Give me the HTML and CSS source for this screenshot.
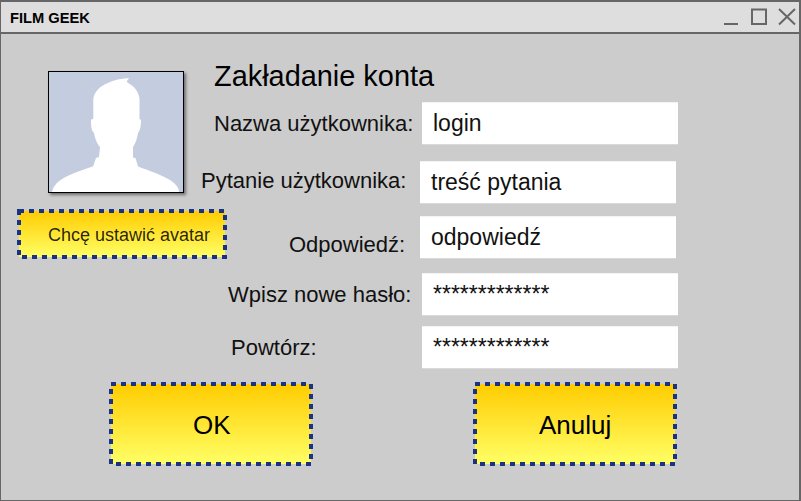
FILE: index.html
```html
<!DOCTYPE html>
<html lang="pl">
<head>
<meta charset="utf-8">
<title>FILM GEEK</title>
<link rel="stylesheet" href="styles.css">
</head>
<body>
<div class="window">
  <header class="titlebar">
    <h1 class="app-name">FILM GEEK</h1>
    <svg class="controls" width="76" height="20" viewBox="0 0 76 20">
      <path d="M1 16H15"/>
      <rect x="29" y="1.500" width="14" height="14.500"/>
      <path d="M56 1L72 16.500M72 1L56 16.500"/>
    </svg>
  </header>
  <main class="content">
    <aside class="profile">
      <svg class="avatar" width="136" height="122" viewBox="0 0 136 122">
        <rect class="avatar-bg" x="0.5" y="0.5" width="135" height="121"/>
        <path class="avatar-person" d="M4 121C5 116 8 112 14 108C22 103 34 99 45 95.500L48 87L51 86L52 76C48 71 47 67 46 62C43 59 43 54 43 48.500L45.300 48V28C46 21 52 15 60 12C67 8.500 75 7.500 81 7.300L78.500 10.500L81.500 13C86 15 91 21 91.500 28V48L93 49C93 55 92 60 90 62C89 67 88 72 85 76V86.500L87.500 87L90 95.500C102 100 114 104 122 109C128 113 131 117 131 121Z"/>
      </svg>
      <button class="btn btn-avatar" type="button">
        <svg class="frame" width="210" height="50"><rect x="2" y="2" width="206" height="46"/></svg>
        <span class="btn-label">Chcę ustawić avatar</span>
      </button>
    </aside>
    <form class="form">
      <h2 class="heading">Zakładanie konta</h2>
      <div class="row row-name"><label>Nazwa użytkownika:</label><div class="field">login</div></div>
      <div class="row row-question"><label>Pytanie użytkownika:</label><div class="field">treść pytania</div></div>
      <div class="row row-answer"><label>Odpowiedź:</label><div class="field">odpowiedź</div></div>
      <div class="row row-password"><label>Wpisz nowe hasło:</label><div class="field">*************</div></div>
      <div class="row row-repeat"><label>Powtórz:</label><div class="field">*************</div></div>
    </form>
  </main>
  <footer class="actions">
    <button class="btn btn-main" type="button">
      <svg class="frame" width="204" height="84"><rect x="2" y="2" width="200" height="80"/></svg>
      <span class="btn-label">OK</span>
    </button>
    <button class="btn btn-main btn-cancel" type="button">
      <svg class="frame" width="204" height="84"><rect x="2" y="2" width="200" height="80"/></svg>
      <span class="btn-label">Anuluj</span>
    </button>
  </footer>
</div>
</body>
</html>
```
FILE: styles.css
```css
* { box-sizing: border-box; }

body {
  margin: 0;
  font-family: "Liberation Sans", Arial, sans-serif;
  color: #000;
}

.window {
  width: 801px;
  height: 501px;
  display: flex;
  flex-direction: column;
  overflow: hidden;
  background: #ccc;
  border: solid #666;
  border-width: 2px 2px 1px 1px;
}

.titlebar {
  flex: none;
  height: 32px;
  display: flex;
  align-items: flex-start;
  justify-content: space-between;
  padding: 6px 0 0 9px;
  background: #dedede;
  border-bottom: 2px solid #666;
}

.app-name {
  margin: 2px 0 0;
  font-size: 14.7px;
  line-height: 17px;
  font-weight: bold;
}

.controls {
  fill: none;
  stroke: #666;
  stroke-width: 2;
}

.content {
  flex: none;
  height: 348px;
  display: flex;
}

.profile {
  flex: none;
  width: 200px;
  padding: 37px 0 0 16px;
}

.avatar {
  display: block;
  margin-left: 31px;
  filter: drop-shadow(2px 2px 1.5px rgba(0, 0, 0, .45));
}

.avatar-bg { fill: #c4cce0; stroke: #000; }
.avatar-person { fill: #fff; }

.btn {
  display: grid;
  padding: 0;
  border: 0;
  background: none;
  font-family: inherit;
  color: #000;
}

.btn > * { grid-area: 1 / 1; }

.frame {
  display: block;
  fill: none;
  stroke: #1a3283;
  stroke-width: 4;
  stroke-dasharray: 5 5;
  background: linear-gradient(#fc0, #ff6) center / calc(100% - 4px) calc(100% - 4px) no-repeat;
}

.btn-label { position: relative; text-align: left; }

.btn-avatar { width: 210px; margin-top: 16px; }

.btn-avatar .btn-label {
  padding: 16px 0 0 31px;
  font-size: 18px;
  line-height: 20px;
  color: rgba(0, 0, 0, .85);
}

.form { flex: none; padding-top: 26px; }

.heading {
  margin: 0 0 0 13px;
  font-size: 28.9px;
  line-height: 32px;
  height: 42px;
  font-weight: normal;
}

.row {
  display: flex;
  height: 43px;
}

.row label {
  width: 221px;
  font-size: 22px;
  line-height: 25px;
  white-space: nowrap;
  color: #111;
}

.field {
  width: 256px;
  padding: 7px 0 0 11px;
  background: #fff;
  border-top: 1px solid #f3f3f3;
  border-bottom: 1px solid #d9d9d9;
  font-size: 23px;
  line-height: 26px;
  color: #111;
}

.row-name label { padding: 9px 0 0 13px; }
.row-question { margin-top: 16px; }
.row-question label { width: 219px; padding-top: 7px; }
.row-answer { margin-top: 12px; }
.row-answer label { width: 219px; padding: 16px 0 0 88px; }
.row-password { margin-top: 14px; }
.row-password label { padding: 9px 0 0 27px; }
.row-repeat { margin-top: 10px; }
.row-repeat label { padding: 9px 0 0 30px; }

.actions {
  display: flex;
  gap: 160px;
  padding-left: 108px;
}

.btn-main { width: 204px; }

.btn-main .btn-label {
  padding: 29px 0 0 84px;
  font-size: 26px;
  line-height: 29px;
}

.btn-cancel .btn-label { padding-left: 66px; }
```
